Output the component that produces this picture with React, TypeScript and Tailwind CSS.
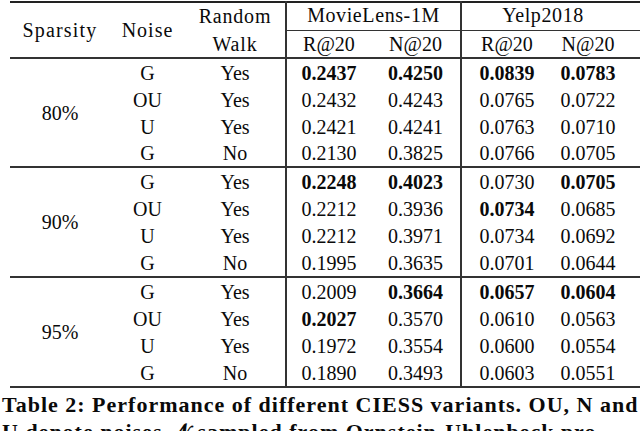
import React from 'react';

type Row = {
  noise: string;
  walk: string;
  vals: [string, string, string, string];
  bold: [boolean, boolean, boolean, boolean];
};

type Group = { sparsity: string; rows: Row[]; heights: string[] };

const groups: Group[] = [
  {
    sparsity: '80%',
    heights: ['h-[28px]', 'h-[27px]', 'h-[27px]', 'h-[27px]'],
    rows: [
      { noise: 'G', walk: 'Yes', vals: ['0.2437', '0.4250', '0.0839', '0.0783'], bold: [true, true, true, true] },
      { noise: 'OU', walk: 'Yes', vals: ['0.2432', '0.4243', '0.0765', '0.0722'], bold: [false, false, false, false] },
      { noise: 'U', walk: 'Yes', vals: ['0.2421', '0.4241', '0.0763', '0.0710'], bold: [false, false, false, false] },
      { noise: 'G', walk: 'No', vals: ['0.2130', '0.3825', '0.0766', '0.0705'], bold: [false, false, false, false] },
    ],
  },
  {
    sparsity: '90%',
    heights: ['h-[28px]', 'h-[27px]', 'h-[27px]', 'h-[28px]'],
    rows: [
      { noise: 'G', walk: 'Yes', vals: ['0.2248', '0.4023', '0.0730', '0.0705'], bold: [true, true, false, true] },
      { noise: 'OU', walk: 'Yes', vals: ['0.2212', '0.3936', '0.0734', '0.0685'], bold: [false, false, true, false] },
      { noise: 'U', walk: 'Yes', vals: ['0.2212', '0.3971', '0.0734', '0.0692'], bold: [false, false, false, false] },
      { noise: 'G', walk: 'No', vals: ['0.1995', '0.3635', '0.0701', '0.0644'], bold: [false, false, false, false] },
    ],
  },
  {
    sparsity: '95%',
    heights: ['h-[28px]', 'h-[27px]', 'h-[27px]', 'h-[28px]'],
    rows: [
      { noise: 'G', walk: 'Yes', vals: ['0.2009', '0.3664', '0.0657', '0.0604'], bold: [false, true, true, true] },
      { noise: 'OU', walk: 'Yes', vals: ['0.2027', '0.3570', '0.0610', '0.0563'], bold: [true, false, false, false] },
      { noise: 'U', walk: 'Yes', vals: ['0.1972', '0.3554', '0.0600', '0.0554'], bold: [false, false, false, false] },
      { noise: 'G', walk: 'No', vals: ['0.1890', '0.3493', '0.0603', '0.0551'], bold: [false, false, false, false] },
    ],
  },
];

const valueCell = ['text-center border-l-2 border-[#333]', 'text-center', 'text-center border-l-2 border-[#333]', 'text-center pr-[16px]'];

export default function App() {
  return (
    <div className="w-[640px] h-[431px] overflow-hidden bg-white text-[#0a0a0a] font-['Liberation_Serif','Times_New_Roman',serif]">
      <table className="ml-[10px] mt-[1px] w-[630px] table-fixed border-t-2 border-[#222] text-[20px] leading-none text-[#0a0a0a] font-['Liberation_Serif','Times_New_Roman',serif]">
        <colgroup>
          <col className="w-[100px]" />
          <col className="w-[75px]" />
          <col className="w-[101px]" />
          <col className="w-[85px]" />
          <col className="w-[90px]" />
          <col className="w-[91px]" />
          <col className="w-[88px]" />
        </colgroup>
        <thead>
          <tr className="h-[28px]">
            <th rowSpan={2} className="text-center font-normal tracking-[1.2px]">Sparsity</th>
            <th rowSpan={2} className="text-center font-normal tracking-[1px]">Noise</th>
            <th className="text-center font-normal tracking-[0.8px] pb-[2px]">Random</th>
            <th colSpan={2} className="text-center font-normal border-l-2 border-b border-[#333] pb-[2px] tracking-[0.6px]">
              MovieLens-1M
            </th>
            <th colSpan={2} className="text-center font-normal border-l-2 border-b border-[#333] pb-[2px] pr-[16px] tracking-[0.6px]">
              Yelp2018
            </th>
          </tr>
          <tr className="h-[28px] border-b-2 border-[#333]">
            <th className="text-center font-normal tracking-[0.8px]">Walk</th>
            <th className="text-center font-normal border-l-2 border-[#333]">R@20</th>
            <th className="text-center font-normal">N@20</th>
            <th className="text-center font-normal border-l-2 border-[#333]">R@20</th>
            <th className="text-center font-normal pr-[16px]">N@20</th>
          </tr>
        </thead>
        {groups.map((g) => (
          <tbody key={g.sparsity} className="border-b-2 border-[#333]">
            {g.rows.map((r, i) => (
              <tr key={i} className={g.heights[i]}>
                {i === 0 && (
                  <td rowSpan={4} className="text-center">
                    {g.sparsity}
                  </td>
                )}
                <td className="text-center">{r.noise}</td>
                <td className="text-center">{r.walk}</td>
                {r.vals.map((v, j) => (
                  <td key={j} className={`${valueCell[j]} ${r.bold[j] ? 'font-bold' : ''}`}>
                    {v}
                  </td>
                ))}
              </tr>
            ))}
          </tbody>
        ))}
      </table>
      <p className="ml-[2px] mt-[3px] w-[640px] text-[22px] font-bold leading-[27px] tracking-[1px] text-[#0a0a0a]">
        Table 2: Performance of different CIESS variants. OU, N and U denote noises 𝒩 sampled from Ornstein-Uhlenbeck pro-
      </p>
    </div>
  );
}
